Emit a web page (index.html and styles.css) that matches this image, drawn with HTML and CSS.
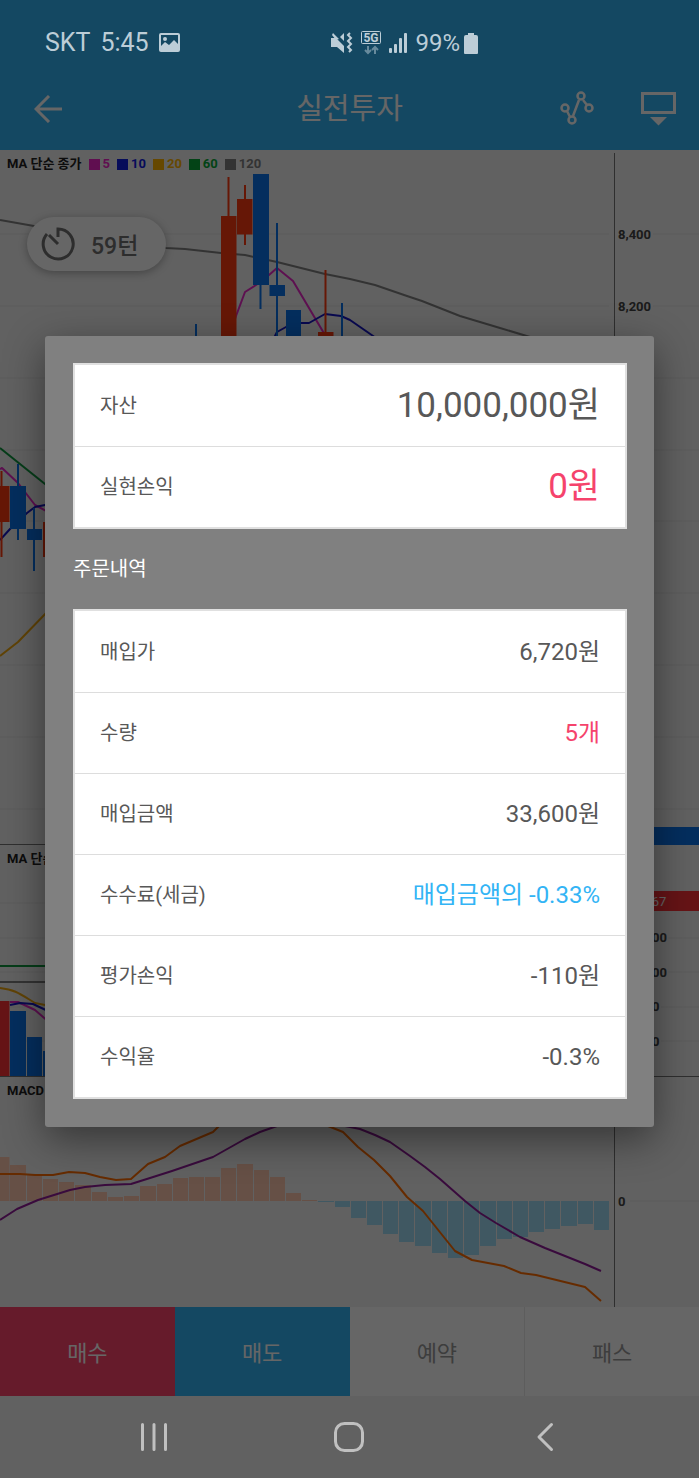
FILE: index.html
```html
<!DOCTYPE html>
<html lang="ko">
<head>
<meta charset="utf-8">
<meta name="viewport" content="width=device-width, initial-scale=1">
<title>실전투자</title>
<link rel="stylesheet" href="styles.css">
</head>
<body>
<div class="screen">
  <div class="status-bar">
    <div class="status-group">
      <span>SKT</span>
      <span>5:45</span>
      <svg class="status-photo" width="22" height="20" viewBox="0 0 22 20"><path fill="currentColor" fill-rule="evenodd" d="M2 0h17a2 2 0 0 1 2 2v15a2 2 0 0 1-2 2H2a2 2 0 0 1-2-2V2a2 2 0 0 1 2-2zm0 2v11l4-4 4 3 5-5 4 4V2zM6 4a2 2 0 1 1 0 4 2 2 0 0 1 0-4z"/></svg>
    </div>
    <div class="status-group status-right">
      <svg width="22" height="22" viewBox="0 0 22 22" fill="none" stroke="currentColor"><path fill="currentColor" stroke="none" d="M0 6h5l8 8v7l-7-6H0zM9 5l4-4v8zM2 1l6 6-3 1L1 3z"/><path stroke-width="2" d="M19 1l-2 2 3 3-3 3 3 3-3 3 3 3-2 2"/></svg>
      <svg class="status-network" width="20" height="24" viewBox="0 0 20 24"><rect x=".5" y=".5" width="19" height="12" rx="1" fill="none" stroke="currentColor"/><text class="network-text" x="10" y="11" text-anchor="middle">5G</text><path opacity=".5" fill="none" stroke="currentColor" stroke-width="2" d="M7 15v7M4 19l3 3 3-3M14 23v-7M11 19l3-3 3 3"/></svg>
      <svg width="19" height="20" viewBox="0 0 19 20" fill="currentColor"><rect y="15" width="3" height="5" rx="1"/><rect x="5" y="11" width="3" height="9" rx="1"/><rect x="10" y="5" width="3" height="15" rx="1"/><rect x="15" width="3" height="20" rx="1"/></svg>
      <span class="battery-text">99%</span>
      <svg width="14" height="21" viewBox="0 0 14 21" fill="currentColor"><path d="M4 0h6v2h2a2 2 0 0 1 2 2v16a1 1 0 0 1-1 1H1a1 1 0 0 1-1-1V4a2 2 0 0 1 2-2h2z"/></svg>
    </div>
  </div>

  <header class="app-bar">
    <button class="icon-button back" aria-label="뒤로"><svg width="28" height="28" viewBox="0 0 28 28" fill="none" stroke="currentColor" stroke-width="3"><path d="M28 14H2M15 1L2 14l13 13"/></svg></button>
    <h1 class="app-title">실전투자</h1>
    <div class="app-tools">
      <button class="icon-button" aria-label="차트"><svg width="34" height="36" viewBox="0 0 34 36" fill="none" stroke="currentColor" stroke-width="2.500"><circle cx="5" cy="17" r="3.500"/><circle cx="12" cy="29" r="3.500"/><circle cx="21" cy="5" r="3.500"/><circle cx="29" cy="17" r="3.500"/><path d="M7 20l3 6M13 25l6-16M23 9l4 5"/></svg></button>
      <button class="icon-button" aria-label="화면"><svg width="35" height="36" viewBox="0 0 35 36"><rect x="1.500" y="2.500" width="32" height="19" fill="none" stroke="currentColor" stroke-width="3"/><path fill="currentColor" d="M9 26h17l-8.500 8.500z"/></svg></button>
    </div>
  </header>

  <main class="charts">
    <section class="panel">
      <div class="legend"><span>MA 단순 종가</span><span class="key ma5">5</span><span class="key ma10">10</span><span class="key ma20">20</span><span class="key ma60">60</span><span class="key ma120">120</span></div>
      <svg class="plot" viewBox="0 150 699 695">
        <path class="grid" d="M0 234H609M0 306H609M0 378H609M0 450H609M0 521H609M0 593H609M0 665H609M0 737H609M0 809H609M653 234H699M653 306H699M615 378H699M615 450H699M615 521H699M615 593H699M615 665H699M615 737H699M615 809H699"/>
        <path class="axis" d="M614.500 153V845M0 844.500H699"/>
        <g class="line">
          <path class="s120" d="M0 220L34 226 100 237 166 248 185 249 221 253 245 255 277 262 325 274 350 279 375 285 407 296 422 301 460 316 500 328 530 337"/>
          <path class="s5" d="M228 340L236 316 245 292 256 285 269 275 277 268 293 281 325 335M0 469L2 468 18 483 35 505 50 513"/>
          <path class="s10" d="M273 340L277 332 286 327 301 323 309 323 325 314 341 316 350 320 376 338M0 540L10 529 27 513 35 507 50 504"/>
          <path class="s60" d="M0 448L50 488"/>
          <path class="s20" d="M0 656L18 642 50 609"/>
        </g>
        <path class="up" d="M221 216h15.500v130H221zM227.500 177h2v40h-2zM237 199h15.500v35.500H237zM244 185h2v60h-2zM318 332h15.500v14H318zM324.500 270h2v62h-2zM0 486h9.500v36H0zM.5 471h2v86h-2zM43 522h7v35h-7z"/>
        <path class="down" d="M253 174h16v111h-16zM259.500 285h2v24h-2zM269.500 285H285v11h-15.500zM276 223h2v120h-2zM286 310h15v30h-15zM341 303h2v40h-2zM195 324h2v20h-2zM10 486h16v43H10zM17 464h2v76h-2zM27 529h15v11H27zM33 508h2v63h-2zM615 827h84v18h-84z"/>
        <g class="axis-label"><text x="618" y="239">8,400</text><text x="618" y="311">8,200</text></g>
      </svg>
      <div class="turns"><svg width="34" height="34" viewBox="0 0 34 34" fill="none" stroke="currentColor" stroke-width="3"><path d="M17 10V2a15 15 0 1 1-11 5M8 8l9 9"/></svg><span>59턴</span></div>
    </section>

    <section class="panel">
      <div class="legend"><span>MA 단순</span></div>
      <svg class="plot" viewBox="0 845 699 232">
        <path class="grid" d="M0 903H609M0 938H609M0 972H609M0 1007H609M0 1041H609M668 938H699M668 972H699M661 1007H699M661 1041H699"/>
        <path class="volume-up" d="M0 1001h9.500v75H0z"/>
        <path class="down" d="M10 1011h16v65H10zM27 1037h15v39H27zM43 1051h7v25h-7z"/>
        <path class="axis" d="M614.500 845V1077M0 1076.500H699"/>
        <g class="line">
          <path class="s60" d="M0 966H50"/><path class="s120" d="M0 982H50"/>
          <path class="s20" d="M0 988C16 990 20 994 35 1003L50 1006"/>
          <path class="s5" d="M10 1002H18L35 1010 50 1023"/>
          <path class="s10" d="M10 1005L20 1003 33 1004 50 1012"/>
        </g>
        <path class="volume-up" d="M615 891h84v20h-84z"/>
        <text class="tag-label" x="620" y="906">201,567</text>
        <g class="axis-label"><text x="619" y="942">160,000</text><text x="619" y="977">120,000</text><text x="619" y="1011">80,000</text><text x="619" y="1046">40,000</text></g>
      </svg>
    </section>

    <section class="panel">
      <div class="legend"><span>MACD</span></div>
      <svg class="plot" viewBox="0 1077 699 230">
        <path class="grid" d="M630 1201H699"/>
        <path class="gain" d="M0 1157h9.500v44H0zM10 1165h16v36H10zM27 1174h15v27H27zM43 1179h15v22H43zM59 1182h15v19H59zM75 1185h16v16H75zM92 1192h15v9H92zM108 1197h15v4h-15zM124 1196h15v5h-15zM140 1186h16v15h-16zM157 1184h15v17h-15zM173 1178h15v23h-15zM189 1177h15v24h-15zM205 1177h15v24h-15zM221 1168h15v33h-15zM237 1164h16v37h-16zM254 1170h15v31h-15zM270 1177h15v24h-15zM286 1193h15v8h-15zM302 1200h15v1h-15z"/>
        <path class="loss" d="M318 1201h16v1h-16zM335 1201h15v6h-15zM351 1201h15v17h-15zM367 1201h15v24h-15zM383 1201h15v33h-15zM399 1201h15v41h-15zM415 1201h16v45h-16zM432 1201h15v52h-15zM448 1201h15v57h-15zM464 1201h15v54h-15zM480 1201h16v45h-16zM497 1201h15v38h-15zM513 1201h15v36h-15zM529 1201h15v31h-15zM545 1201h15v28h-15zM561 1201h16v25h-16zM578 1201h15v23h-15zM594 1201h15v29h-15z"/>
        <path class="axis" d="M614.500 1077V1307"/>
        <g class="line">
          <path class="signal" d="M0 1220L17 1209 38 1200 70 1190 85 1187 105 1185 131 1184 150 1178 172 1171 213 1157 245 1139 260 1132 277 1126 310 1120 345 1126 360 1129 375 1135 390 1142 410 1156 425 1167 440 1179 465 1201 480 1213 496 1223 520 1237 545 1248 585 1264 601 1271"/>
          <path class="macd" d="M0 1174H20L35 1175H53L69 1172 85 1173 100 1177 116 1180 131 1179 148 1164 165 1157 180 1146 213 1132 223 1122 270 1105 328 1126 343 1132 358 1147 374 1160 390 1176 407 1197 423 1211 455 1251 472 1260 504 1266 521 1273 536 1275 585 1287 601 1301"/>
        </g>
        <g class="axis-label"><text x="618" y="1206">0</text></g>
      </svg>
    </section>
  </main>

  <div class="actions">
    <button class="action buy">매수</button>
    <button class="action sell">매도</button>
    <button class="action">예약</button>
    <button class="action pass">패스</button>
  </div>

  <nav class="nav-bar">
    <button class="icon-button" aria-label="최근 앱"><svg width="28" height="30" viewBox="0 0 28 30" stroke="currentColor" stroke-width="3" stroke-linecap="round"><path d="M2.500 2.500v25M14 2.500v25M25.500 2.500v25"/></svg></button>
    <button class="icon-button" aria-label="홈"><svg width="30" height="30" viewBox="0 0 30 30" fill="none" stroke="currentColor" stroke-width="3"><rect x="1.500" y="1.500" width="27" height="27" rx="9"/></svg></button>
    <button class="icon-button" aria-label="이전"><svg width="18" height="30" viewBox="0 0 18 30" fill="none" stroke="currentColor" stroke-width="3" stroke-linecap="round" stroke-linejoin="round"><path d="M15.500 2.500L3 15l12.500 12.500"/></svg></button>
  </nav>

  <div class="scrim">
    <div class="dialog" role="dialog" aria-modal="true" aria-label="주문내역">
      <dl class="card card-large">
        <div class="row"><dt>자산</dt><dd>10,000,000원</dd></div>
        <div class="row"><dt>실현손익</dt><dd class="pink">0원</dd></div>
      </dl>
      <h2 class="dialog-heading">주문내역</h2>
      <dl class="card">
        <div class="row"><dt>매입가</dt><dd>6,720원</dd></div>
        <div class="row"><dt>수량</dt><dd class="pink">5개</dd></div>
        <div class="row"><dt>매입금액</dt><dd>33,600원</dd></div>
        <div class="row"><dt>수수료(세금)</dt><dd class="blue">매입금액의 -0.33%</dd></div>
        <div class="row"><dt>평가손익</dt><dd>-110원</dd></div>
        <div class="row"><dt>수익율</dt><dd>-0.3%</dd></div>
      </dl>
    </div>
  </div>
</div>
</body>
</html>
```
FILE: styles.css
```css
* { box-sizing: border-box; }

body {
  margin: 0;
  font-family: Roboto, "Noto Sans CJK KR", sans-serif;
  color: #585858;
}

button {
  border: 0;
  padding: 0;
  background: none;
  font: inherit;
  color: inherit;
}

svg { display: block; flex: none; }

.screen {
  position: relative;
  min-height: 100vh;
  display: flex;
  flex-direction: column;
  background: #f2f2f2;
}

.status-bar {
  position: relative;
  z-index: 2;
  display: grid;
  grid-template-columns: 47% 1fr;
  height: 67px;
  padding-top: 28px;
  background: #144862;
  color: #bccdd7;
  font-size: 25px;
  line-height: 30px;
}

.status-group { display: flex; align-items: center; gap: 10px; padding-left: 45px; height: 30px; }
.status-right { gap: 8px; padding-left: 2px; }
.battery-text { font-size: 24px; margin-right: -4px; }
.network-text { font-size: 12px; font-weight: 700; fill: currentColor; }

.app-bar {
  display: grid;
  grid-template-columns: 1fr auto 1fr;
  align-items: center;
  height: 83px;
  padding: 0 23px;
  background: #33b4f5;
  color: #fff;
}

.app-title { margin: 0; font-size: 29px; font-weight: 400; line-height: 44px; }
.app-tools { display: flex; justify-content: flex-end; gap: 47px; }
.icon-button { display: flex; align-items: center; justify-content: center; justify-self: start; }
.back { padding-left: 11px; }

.charts { flex: 1; }
.panel { position: relative; }
.plot { width: 100%; height: auto; }

.legend {
  position: absolute;
  top: 4px;
  left: 7px;
  display: flex;
  gap: 7px;
  font-size: 13px;
  font-weight: 700;
  line-height: 20px;
  color: #222;
}

.key { display: flex; align-items: center; gap: 3px; }
.key::before { content: ""; width: 11px; height: 11px; background: currentColor; }
.ma5 { color: #f025c8; }
.ma10 { color: #1020e0; }
.ma20 { color: #ffb400; }
.ma60 { color: #08a838; }
.ma120 { color: #808080; }

.grid { stroke: #e3e3e3; stroke-width: 1; fill: none; }
.axis { stroke: #777; stroke-width: 1; fill: none; }
.line { fill: none; stroke-width: 2; stroke-linejoin: round; }
.s5 { stroke: #e828c8; }
.s10 { stroke: #1818c8; }
.s20 { stroke: #f0a810; }
.s60 { stroke: #109840; }
.s120 { stroke: #808080; }
.signal { stroke: #901c98; }
.macd { stroke: #ff6c00; }
.up { fill: #ff3a10; }
.down { fill: #0a74ec; }
.volume-up { fill: #ff3338; }
.gain { fill: #ffc9b0; }
.loss { fill: #a0dcf4; }
.axis-label { font-size: 13px; font-weight: 700; fill: #444; }
.tag-label { font-size: 13px; fill: #fff; }

.turns {
  position: absolute;
  top: 67px;
  left: 27px;
  display: flex;
  align-items: center;
  gap: 16px;
  height: 54px;
  padding: 0 28px 0 14px;
  border-radius: 27px;
  background: #fff;
  box-shadow: 0 2px 8px rgba(0, 0, 0, .3);
  font-size: 23px;
  font-weight: 500;
  color: #707070;
}

.actions { display: grid; grid-template-columns: repeat(4, 1fr); }
.action { height: 89px; padding-bottom: 2px; background: #fff; color: #999; font-size: 22px; }
.action.buy { background: #ff446c; color: #fff; }
.action.sell { background: #33b4f5; color: #fff; }
.action.pass { border-left: 1px solid #e8e8e8; }

.nav-bar {
  position: relative;
  z-index: 2;
  display: grid;
  grid-template-columns: repeat(3, 1fr);
  height: 82px;
  padding: 0 56px;
  background: #616161;
  color: #c0c0c0;
}

.nav-bar .icon-button { justify-self: center; }

.scrim {
  position: absolute;
  inset: 0;
  z-index: 1;
  display: flex;
  align-items: center;
  padding: 67px 45px 82px;
  background: rgba(0, 0, 0, .6);
}

.dialog {
  flex: 1;
  padding: 27px 27px 28px 28px;
  border-radius: 3px;
  background: #808080;
  box-shadow: 0 12px 40px rgba(0, 0, 0, .45);
}

.card {
  margin: 0;
  border: 2px solid #e0e0e0;
  background: #fff;
  font-size: 24px;
  line-height: 36px;
}

.card-large { font-size: 35px; }

.row {
  display: flex;
  align-items: center;
  justify-content: space-between;
  height: 81px;
  padding: 0 25px;
}

.row + .row { border-top: 1px solid #ddd; }

dt { font-size: 20px; }
dd { margin: 0; }
.pink { color: #f5436c; }
.blue { color: #33b4f5; }

.dialog-heading {
  margin: 0;
  font-size: 20px;
  font-weight: 400;
  line-height: 80px;
  color: #fff;
}
```
